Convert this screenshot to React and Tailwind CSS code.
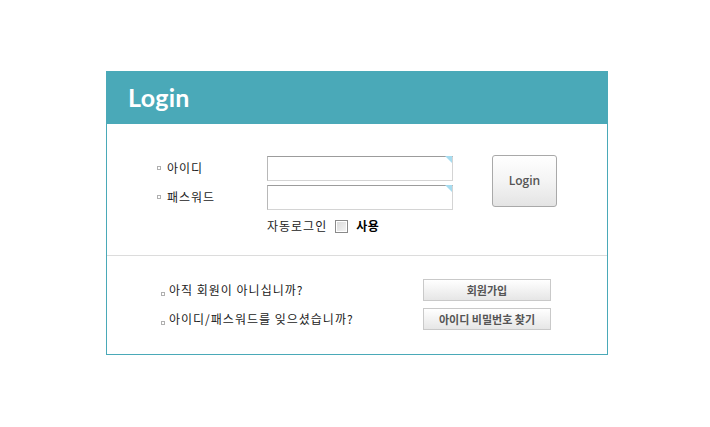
import React from 'react';

const kr = "font-['Noto_Sans_CJK_KR','Noto_Sans',sans-serif]";

const Bullet = ({ className = '' }) => (
  <span className={`inline-block w-[4px] h-[4px] border border-[#b0b0b0] ${className}`} />
);

const TextInput = ({ type = 'text' }) => (
  <div className="relative w-[186px] h-[25px]">
    <input
      type={type}
      className="w-full h-full border border-t-[#9c9c9c] border-l-[#b8b8b8] border-r-[#d4d4d4] border-b-[#d4d4d4] bg-white outline-none px-1 text-xs"
    />
    {/* corner mark */}
    <span className="absolute top-[1px] right-[1px] w-0 h-0 border-t-[7px] border-t-[#a6dcf0] border-l-[7px] border-l-transparent" />
  </div>
);

const SmallButton = ({ children }) => (
  <button
    className={`w-[128px] h-[22px] border border-[#c9c9c9] bg-gradient-to-b from-white to-[#e6e6e6] text-[11px] font-bold text-[#555] leading-none ${kr}`}
  >
    {children}
  </button>
);

export default function App() {
  return (
    <div className="w-[710px] h-[427px] bg-white pt-[71px] pl-[106px]">
      <div className="w-[502px]">
        {/* Header */}
        <div className="h-[53px] bg-[#4aa9b8] flex items-center pl-[22px]">
          <h1 className="text-white text-[25px] font-bold font-['Lato',sans-serif] leading-none tracking-[0.3px]">
            Login
          </h1>
        </div>

        <div className="border border-t-0 border-[#4aa9b8]">
          {/* Login form */}
          <div className="flex pt-[31px] pb-[19px] pl-[50px] border-b border-[#dcdcdc]">
            <div className="flex flex-col gap-[4px] w-[110px] text-[12px] text-[#222] tracking-[1px]">
              <div className={`h-[25px] flex items-center gap-[6px] ${kr}`}>
                <Bullet />
                <span>아이디</span>
              </div>
              <div className={`h-[25px] flex items-center gap-[6px] ${kr}`}>
                <Bullet />
                <span>패스워드</span>
              </div>
            </div>

            <div className="flex flex-col gap-[4px]">
              <TextInput />
              <TextInput type="password" />
              <div className={`flex items-center mt-[3px] h-[20px] text-[12px] text-[#222] ${kr}`}>
                <span className="tracking-[1px]">자동로그인</span>
                <span className="ml-[8px] w-[13px] h-[13px] border border-[#8a8a8a] bg-gradient-to-br from-[#d8d8d8] to-[#f6f6f6] shadow-[inset_0_0_0_1px_#fff]" />
                <span className="ml-[8px] font-bold text-black tracking-[0.5px]">사용</span>
              </div>
            </div>

            <button className="ml-[39px] w-[65px] h-[52px] rounded-[3px] border border-[#a9a9a9] bg-gradient-to-b from-white via-[#f4f4f4] to-[#e4e4e4] text-[12px] font-semibold text-[#555] font-['Open_Sans',sans-serif]">
              Login
            </button>
          </div>

          {/* Join / find */}
          <div className="flex flex-col gap-[7px] pt-[23px] pb-[24px] pl-[54px] pr-[56px]">
            <div className="flex items-center justify-between">
              <div className={`flex items-end gap-[4px] text-[12px] text-[#222] tracking-[1px] ${kr}`}>
                <Bullet className="mb-[3px]" />
                <span>아직 회원이 아니십니까?</span>
              </div>
              <SmallButton>회원가입</SmallButton>
            </div>
            <div className="flex items-center justify-between">
              <div className={`flex items-end gap-[4px] text-[12px] text-[#222] tracking-[1px] ${kr}`}>
                <Bullet className="mb-[3px]" />
                <span>아이디/패스워드를 잊으셨습니까?</span>
              </div>
              <SmallButton>아이디 비밀번호 찾기</SmallButton>
            </div>
          </div>
        </div>
      </div>
    </div>
  );
}
